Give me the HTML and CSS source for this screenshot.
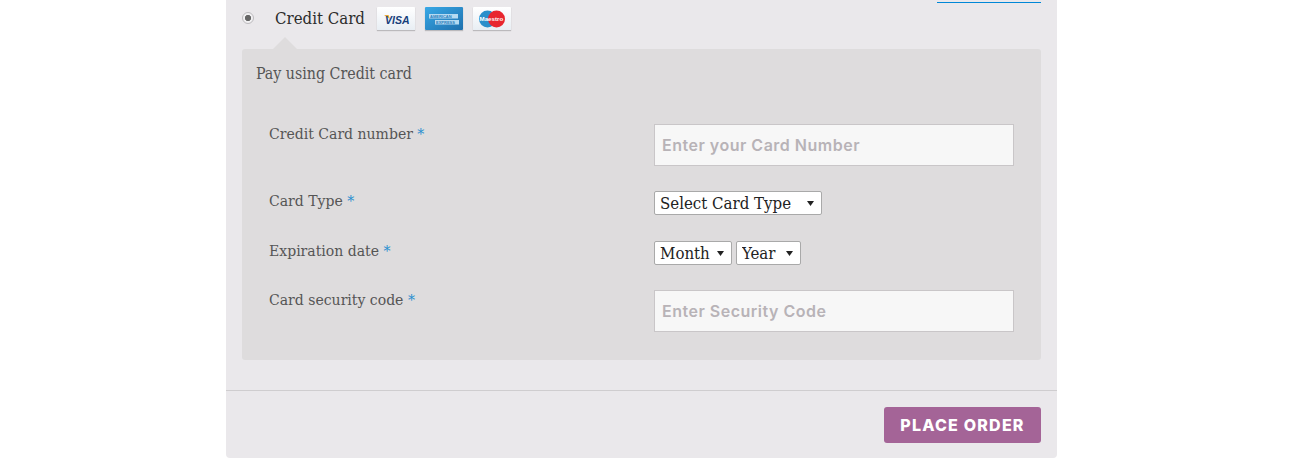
FILE: index.html
```html
<!DOCTYPE html>
<html lang="en">
<head>
    <meta charset="UTF-8">
    <meta name="viewport" content="width=device-width, initial-scale=1.0">
    <title>Checkout</title>
    <link rel="stylesheet" href="styles.css">
</head>
<body>
    <div class="checkout">
        <div class="method">
            <input class="radio" type="radio" name="method" checked>
            <label class="method-name">Credit Card</label>
            <svg class="card" width="38" height="23" viewBox="0 0 38 23">
                <defs>
                    <linearGradient id="white" x1="0" y1="0" x2="0" y2="1">
                        <stop offset="0" stop-color="#ffffff"/>
                        <stop offset="1" stop-color="#e8eef4"/>
                    </linearGradient>
                    <linearGradient id="blue" x1="0" y1="0" x2="1" y2="1">
                        <stop offset="0" stop-color="#38a8e6"/>
                        <stop offset="1" stop-color="#1f70ad"/>
                    </linearGradient>
                </defs>
                <rect width="38" height="23" rx="1" fill="url(#white)"/>
                <path d="M7 8h4.5l1.5 4z" fill="#e9a634"/>
                <text x="8" y="16.5" class="visa">VISA</text>
            </svg>
            <svg class="card" width="38" height="23" viewBox="0 0 38 23">
                <rect width="38" height="23" rx="1" fill="url(#blue)"/>
                <rect x="4" y="7" width="29" height="4.5" fill="#b5daf1"/>
                <rect x="10" y="13" width="24" height="4.5" fill="#b5daf1"/>
                <text x="5" y="10.8" class="amex">AMERICAN</text>
                <text x="11" y="16.8" class="amex">EXPRESS</text>
            </svg>
            <svg class="card" width="38" height="23" viewBox="0 0 38 23">
                <rect width="38" height="23" rx="1" fill="url(#white)"/>
                <circle cx="14.5" cy="12" r="8.5" fill="#2b8fcb"/>
                <circle cx="23.5" cy="12" r="8.5" fill="#e8262f"/>
                <text x="6.5" y="14" class="maestro">Maestro</text>
            </svg>
            <a class="top-link" href="#"></a>
        </div>

        <div class="pay-box">
            <p class="pay-note">Pay using Credit card</p>
            <form class="card-form">
                <label class="field-label">Credit Card number <span class="required">*</span></label>
                <input class="text-input" type="text" placeholder="Enter your Card Number">

                <label class="field-label">Card Type <span class="required">*</span></label>
                <div class="field-selects">
                    <select class="select-type"><option>Select Card Type</option></select>
                </div>

                <label class="field-label">Expiration date <span class="required">*</span></label>
                <div class="field-selects field-dates">
                    <select class="select-month"><option>Month</option></select>
                    <select class="select-year"><option>Year</option></select>
                </div>

                <label class="field-label">Card security code <span class="required">*</span></label>
                <input class="text-input" type="text" placeholder="Enter Security Code">
            </form>
        </div>

        <div class="actions">
            <button class="place-order" type="button">PLACE ORDER</button>
        </div>
    </div>
</body>
</html>
```

FILE: styles.css
```css
body {
    margin: 0;
    background-color: #fff;
    font-family: "DejaVu Serif Condensed", "DejaVu Serif", serif;
    color: #555;
}

/* Panel */
.checkout {
    width: 831px;
    height: 458px;
    margin-left: 226px;
    background-color: #eae8eb;
    border-radius: 0 0 4px 4px;
}

/* Payment method row */
.method {
    display: flex;
    align-items: flex-start;
    height: 49px;
    padding: 1px 16px 0;
    box-sizing: border-box;
}

.radio {
    appearance: none;
    width: 12px;
    height: 12px;
    margin: 11px 21px 0 0;
    border: 1px solid #bdbbbe;
    border-radius: 50%;
    box-sizing: border-box;
    background: radial-gradient(circle, #666 0 2.8px, #f1f0f2 3.4px);
}

.method-name {
    width: 102px;
    margin-top: 7px;
    font-size: 16.7px;
    line-height: 20px;
    color: #2c2c2c;
}

.card {
    display: block;
    margin: 6px 10px 0 0;
    box-shadow: 0 1px 1px rgba(0, 0, 0, 0.2);
}

.visa {
    font: italic bold 10.5px "Liberation Sans", sans-serif;
    fill: #173f7c;
}

.amex {
    font: bold 4px "Liberation Sans", sans-serif;
    fill: #2a7fbd;
}

.maestro {
    font: bold 6.2px "Liberation Sans", sans-serif;
    fill: #fff;
}

.top-link {
    display: block;
    width: 104px;
    height: 1px;
    margin: 1px 0 0 auto;
    background-color: #0087d7;
}

/* Grey box */
.pay-box {
    position: relative;
    height: 311px;
    margin: 0 16px;
    padding: 15px 27px 0 14px;
    background-color: #dedcdd;
    border-radius: 3px;
    box-sizing: border-box;
}

.pay-box::before {
    content: "";
    position: absolute;
    left: 31px;
    top: -12px;
    border-left: 12px solid transparent;
    border-right: 12px solid transparent;
    border-bottom: 12px solid #dedcdd;
}

.pay-note {
    margin: 0;
    font-size: 15.8px;
    line-height: 20px;
}

.card-form {
    display: grid;
    grid-template-columns: 385px 360px;
    row-gap: 25px;
    margin: 40px 0 0 13px;
}

.field-label {
    font-size: 15.6px;
    line-height: 20px;
}

.required {
    color: #2a8fd0;
}

.text-input {
    height: 42px;
    padding: 0 7px;
    border: 1px solid #c9c6c8;
    background-color: #f7f7f7;
    box-sizing: border-box;
    font-family: "Inter", sans-serif;
    font-size: 16px;
    font-weight: 600;
    letter-spacing: 0.5px;
}

.text-input::placeholder {
    color: #b8b3b7;
}

.field-selects {
    display: flex;
    gap: 4px;
    height: 25px;
}

.field-dates {
    height: 24px;
}

select {
    appearance: none;
    height: 24px;
    padding: 0 0 0 5px;
    font-family: "DejaVu Serif Condensed", "DejaVu Serif", serif;
    font-size: 16.7px;
    color: #222;
    background: #fff url("data:image/svg+xml,%3Csvg xmlns='http://www.w3.org/2000/svg' width='7' height='5'%3E%3Cpath d='M0 0h7l-3.5 5z' fill='%23222'/%3E%3C/svg%3E") no-repeat right 7px center;
    border: 1px solid #a9a9a9;
    border-radius: 2px;
}

.select-type {
    width: 168px;
}

.select-month {
    width: 78px;
}

.select-year {
    width: 65px;
}

/* Bottom actions */
.actions {
    display: flex;
    justify-content: flex-end;
    margin-top: 30px;
    padding: 16px 16px 0;
    border-top: 1px solid #cfcdcf;
}

.place-order {
    width: 157px;
    height: 36px;
    padding: 0;
    border: none;
    border-radius: 3px;
    background-color: #a46497;
    color: #fff;
    font-family: "Inter", sans-serif;
    font-size: 16px;
    font-weight: 800;
    letter-spacing: 1.2px;
}
```
